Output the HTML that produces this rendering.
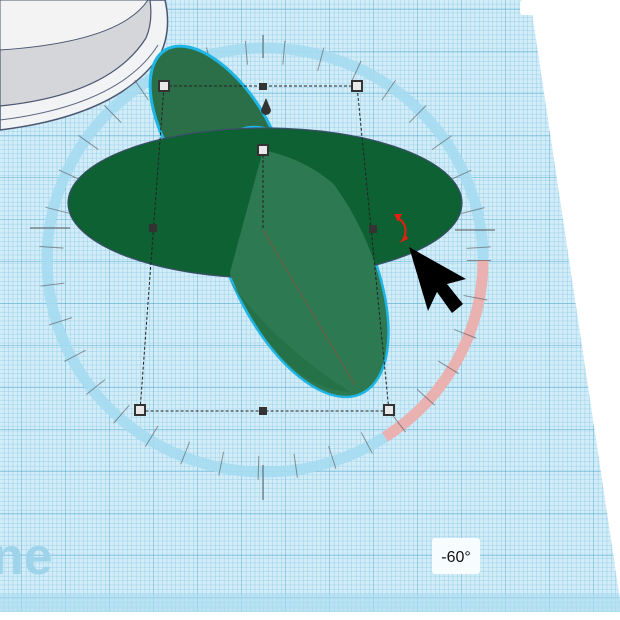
<!DOCTYPE html>
<html><head><meta charset="utf-8"><style>
html,body{margin:0;padding:0;background:#fff;width:620px;height:620px;overflow:hidden}
svg{display:block}
</style></head><body>
<svg width="620" height="620" viewBox="0 0 620 620" xmlns="http://www.w3.org/2000/svg">
<defs>
<pattern id="minor" width="4.4" height="4.4" patternUnits="userSpaceOnUse">
<path d="M4.4 0V4.4M0 4.4H4.4" stroke="#8ccae5" stroke-width="0.8" fill="none"/>
</pattern>
<pattern id="major" width="44" height="42" patternUnits="userSpaceOnUse" x="22" y="10">
<path d="M44 0V42M0 42H44" stroke="#5eafd2" stroke-width="1" fill="none"/>
</pattern>
<clipPath id="plane"><polygon points="0,0 530,0 620,600 620,612 0,612"/></clipPath>
<clipPath id="front"><path d="M263,150 Q335,165 372,232 L430,232 L430,430 L180,430 L228,280 Z"/></clipPath>
</defs>
<g clip-path="url(#plane)">
<rect width="620" height="620" fill="#d2ecf8"/>
<rect width="620" height="620" fill="url(#minor)"/>
<rect width="620" height="620" fill="url(#major)"/>
<rect x="0" y="594" width="620" height="20" fill="#a8dcf0" opacity="0.6"/>
<polygon points="530,0 546,0 620,500 620,600" fill="#8fd0ec" opacity="0.5"/>
</g>
<rect x="520" y="0" width="100" height="15" rx="3" fill="#fff"/>
<text x="-8" y="574" font-family="Liberation Sans, sans-serif" font-weight="bold" font-size="52" fill="#9fd3ea">ne</text>

<!-- cylinder -->
<path d="M0,0 H165 Q172,30 160,55 Q120,115 0,130 Z" fill="#f2f3f5" stroke="#4a5670" stroke-width="1.5"/>
<path d="M0,120 Q120,105 158,45" fill="none" stroke="#5a6780" stroke-width="1"/>
<path d="M0,0 H150 Q153,22 146,38 Q110,95 0,106 Z" fill="#d4d6d9" stroke="#4a5670" stroke-width="1.2"/>
<path d="M0,0 H148 Q120,42 0,50 Z" fill="#f3f3f4" stroke="#4a5670" stroke-width="1"/>

<!-- ring -->
<ellipse cx="265" cy="260" rx="218" ry="212" fill="none" stroke="#a5dbf1" stroke-width="11" opacity="0.9"/>
<path d="M483 260 A218 212 0 0 1 385 437" fill="none" stroke="#eab1b1" stroke-width="11"/>
<ellipse cx="265" cy="260" rx="214" ry="208" fill="none" stroke="#555" stroke-width="24" stroke-dasharray="1 36.5" opacity="0.6"/>
<g stroke="#555" stroke-width="1.2" opacity="0.8">
<line x1="30" y1="228" x2="70" y2="228"/><line x1="455" y1="230" x2="495" y2="230"/>
<line x1="263" y1="35" x2="263" y2="58"/><line x1="263" y1="465" x2="263" y2="500"/>
</g>

<!-- shape -->
<g stroke="#1fb6e6" stroke-width="3">
<ellipse cx="218" cy="135" rx="100" ry="50" transform="rotate(58 218 135)" fill="#2a6f47"/>
<ellipse cx="300" cy="262" rx="145" ry="70" transform="rotate(65 300 262)" fill="#2b7a50"/>
</g>
<ellipse cx="265" cy="203" rx="197" ry="75" fill="#0e6132" stroke="#3b4e6a" stroke-width="1.2"/>
<g clip-path="url(#front)">
<ellipse cx="300" cy="262" rx="144" ry="69" transform="rotate(65 300 262)" fill="#2d7a52"/>
<path d="M228 278 Q270 340 350 392 Q300 390 260 330Z" fill="#1f6a3e" opacity="0.5"/>
</g>

<!-- bounding box -->
<g stroke="#222" stroke-width="1" stroke-dasharray="3,2" fill="none">
<polyline points="164,86 357,86 389,411 140,411 164,86"/>
<line x1="263" y1="150" x2="263" y2="230"/>
</g>
<line x1="263" y1="230" x2="355" y2="385" stroke="#8a5040" stroke-width="0.8"/>
<g fill="#e8e8e8" stroke="#333" stroke-width="2">
<rect x="159" y="81" width="10" height="10"/><rect x="352" y="81" width="10" height="10"/>
<rect x="135" y="405" width="10" height="10"/><rect x="384" y="405" width="10" height="10"/>
<rect x="258" y="145" width="10" height="10"/>
</g>
<g fill="#333">
<rect x="259" y="83" width="8" height="7"/><rect x="149" y="224" width="8" height="8"/>
<rect x="369" y="225" width="8" height="8"/><rect x="259" y="407" width="8" height="8"/>
<path d="M266 98 L271 110 A5 5 0 1 1 261 110 Z"/>
</g>
<path d="M398 218 Q410 226 403 240" fill="none" stroke="#e02010" stroke-width="2"/>
<path d="M394 214 L402 214 L398 222Z M399 243 L408 239 L406 235Z" fill="#e02010"/>
<polygon points="409,247 428,311 437,292 452,313 463,304 447,284 466,279" fill="#000"/>
<rect x="432" y="538" width="48" height="36" rx="3" fill="#f7fcfe"/>
<text x="456" y="562" text-anchor="middle" font-family="Liberation Sans, sans-serif" font-size="16" fill="#111">-60°</text>
</svg>
</body></html>
